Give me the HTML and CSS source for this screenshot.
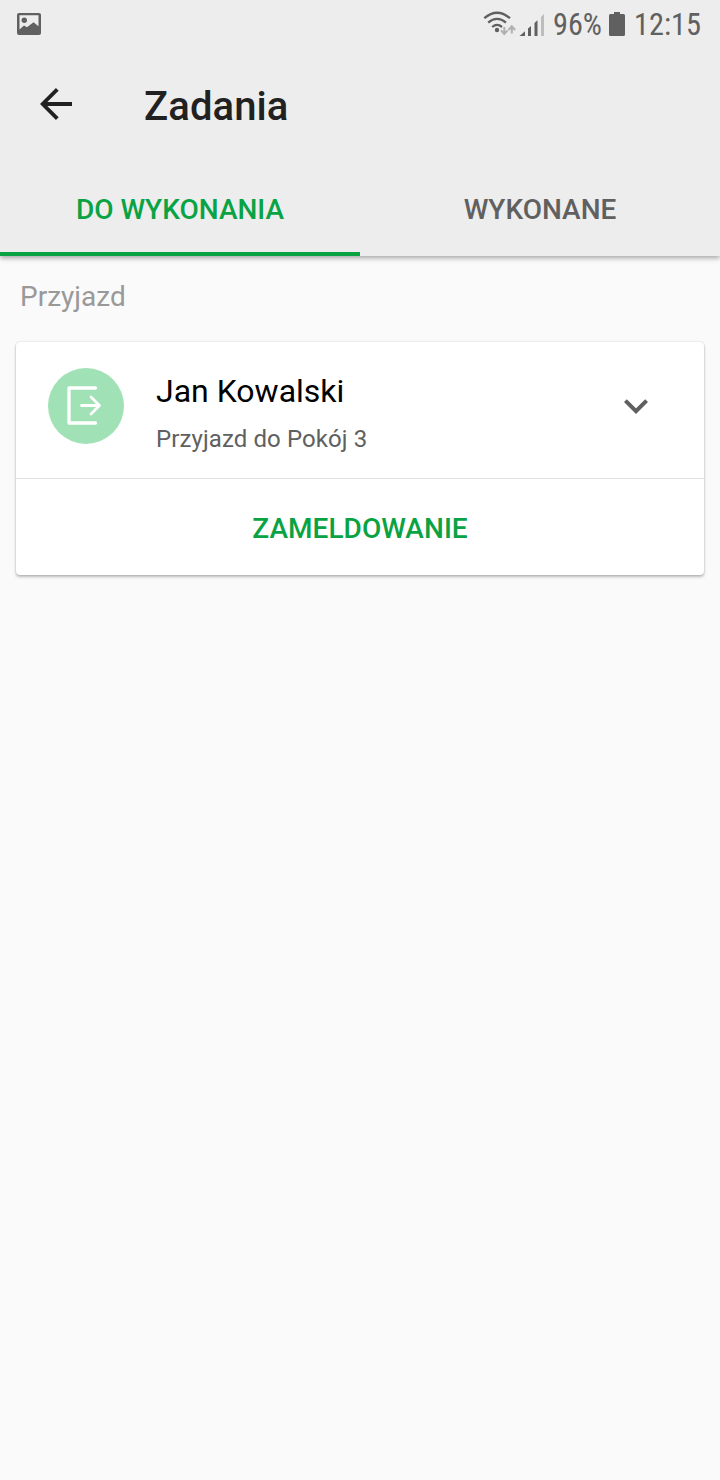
FILE: index.html
```
<!DOCTYPE html>
<html lang="pl">
<head>
    <meta charset="UTF-8">
    <meta name="viewport" content="width=device-width, initial-scale=1.0">
    <title>Zadania</title>
    <link rel="stylesheet" href="styles.css">
</head>
<body>
    <header class="app-header">
        <div class="status-bar">
            <svg class="icon-picture" width="24" height="22" viewBox="0 0 24 22">
                <path fill-rule="evenodd" d="M2 0h20a2 2 0 0 1 2 2v18a2 2 0 0 1-2 2H2a2 2 0 0 1-2-2V2a2 2 0 0 1 2-2zM2.500 2.300V16.500L7 12.500l3 1.800L16.500 9.300l5 4V2.300z"/>
                <circle cx="7.300" cy="7.300" r="2.700"/>
            </svg>
            <svg class="icon-signal" width="64" height="28" viewBox="0 0 64 28">
                <!-- wifi -->
                <g fill="none" stroke="#606060" stroke-width="2.300">
                    <path d="M1.300 8.200Q14 -2.700 27 8.200"/>
                    <path d="M5.200 12.600Q14 5.200 23 12.600"/>
                    <path d="M9.200 17Q14 12.800 19 17"/>
                </g>
                <circle cx="14" cy="20" r="2.200"/>
                <path d="M21.300 17v6M18 20.300l3.300 3.700 3.300-3.700M28.800 23.500v-6M25.500 20l3.300-3.700 3.300 3.700" fill="none" stroke="#b0b0b0" stroke-width="2"/>
                <!-- bars -->
                <path d="M36.500 26l5.500-4.800V26zM45 18.500l3-2.500v10h-3zM51.500 13l3-2.800V26h-3z"/>
                <path d="M58 7l3-3v22h-3z" fill="#bdbdbd"/>
            </svg>
            <svg class="battery-level" width="50" height="48"><text x="0" y="35" textLength="49" lengthAdjust="spacingAndGlyphs">96%</text></svg>
            <svg class="icon-battery" width="16" height="24" viewBox="0 0 16 24">
                <path d="M5 0h6v2h3.500a1.500 1.500 0 0 1 1.500 1.500v19a1.500 1.500 0 0 1-1.500 1.500h-13A1.500 1.500 0 0 1 0 22.500v-19A1.500 1.500 0 0 1 1.500 2H5z"/>
            </svg>
            <svg class="clock" width="68" height="48"><text x="0" y="35" textLength="67" lengthAdjust="spacingAndGlyphs">12:15</text></svg>
        </div>
        <div class="toolbar">
            <svg class="icon-back" width="32" height="32" viewBox="0 0 32 32">
                <path d="M32 16H3M17.300 1.400L2.700 16l14.600 14.600"/>
            </svg>
            <h1>Zadania</h1>
        </div>
        <nav class="tabs">
            <a class="tab active">DO WYKONANIA</a>
            <a class="tab">WYKONANE</a>
        </nav>
    </header>

    <main>
        <h2>Przyjazd</h2>
        <section class="card">
            <div class="card-header">
                <div class="avatar">
                    <svg width="38" height="40" viewBox="0 0 38 40">
                        <path d="M29.500 2H3v35h26.500" stroke-width="3.300"/>
                        <path d="M15.500 19.500h18M25 11l8.500 8.500-8.500 8.500" stroke-width="2.800"/>
                    </svg>
                </div>
                <div class="guest">
                    <div class="guest-name">Jan Kowalski</div>
                    <div class="guest-info">Przyjazd do Pokój 3</div>
                </div>
                <svg class="icon-expand" width="24" height="15" viewBox="0 0 24 15">
                    <path d="M1.400 1.600L12 12.200 22.600 1.600"/>
                </svg>
            </div>
            <button class="card-action">ZAMELDOWANIE</button>
        </section>
    </main>
</body>
</html>
```
FILE: styles.css
```
:root {
    --green: #0aa344;
    --grey: #606060;
}

* {
    box-sizing: border-box;
}

body {
    margin: 0;
    min-height: 100vh;
    background-color: #fafafa;
    font-family: Roboto, sans-serif;
}

h1, h2 {
    margin: 0;
}

.app-header {
    height: 256px;
    background-color: #ededed;
    box-shadow: 0 2px 5px rgba(0, 0, 0, 0.35);
}

/* status bar */
.status-bar {
    display: flex;
    align-items: center;
    height: 48px;
    padding: 0 18px 0 17px;
    fill: var(--grey);
    font-size: 30.5px;
}

.status-bar text {
    font-family: "Roboto Condensed", Roboto, sans-serif;
}

.icon-signal {
    margin-left: auto;
    margin-right: 6px;
}

.battery-level {
    margin-right: 6px;
}

.icon-battery {
    margin-right: 9px;
}

.battery-level, .clock {
    overflow: visible;
}

.toolbar {
    display: flex;
    align-items: center;
    height: 112px;
    padding-left: 40px;
}

.icon-back {
    fill: none;
    stroke: #212121;
    stroke-width: 3.8;
}

.toolbar h1 {
    margin-left: 72px;
    padding-top: 6px;
    font-size: 40px;
    font-weight: 500;
    line-height: 48px;
    letter-spacing: 0.1px;
    color: #212121;
}

/* tabs */
.tabs {
    display: flex;
    height: 96px;
}

.tab {
    flex: 1;
    padding-top: 4px;
    border-bottom: 4px solid transparent;
    font-size: 28px;
    font-weight: 500;
    line-height: 92px;
    height: 96px;
    text-align: center;
    color: var(--grey);
}

.tab.active {
    color: var(--green);
    border-bottom-color: var(--green);
}

main {
    padding: 21px 16px;
}

main h2 {
    padding-left: 4px;
    font-size: 28px;
    font-weight: 400;
    line-height: 40px;
    color: #999;
}

.card {
    margin-top: 25px;
    background-color: #fff;
    border-radius: 4px;
    box-shadow: 0 2px 3px rgba(0, 0, 0, 0.25), 0 0 2px rgba(0, 0, 0, 0.16);
}

.card-header {
    display: flex;
    align-items: flex-start;
    height: 137px;
    padding: 26px 56px 0 32px;
    border-bottom: 1px solid #e0e0e0;
}

.avatar {
    display: flex;
    align-items: center;
    justify-content: center;
    width: 76px;
    height: 76px;
    padding-right: 2px;
    border-radius: 50%;
    background-color: #a0e2b5;
}

.avatar svg {
    fill: none;
    stroke: #fff;
    stroke-linecap: round;
    stroke-linejoin: round;
}

.guest {
    flex: 1;
    margin-left: 32px;
}

.guest-name {
    padding-top: 3px;
    font-size: 32px;
    line-height: 40px;
    color: #000;
}

.guest-info {
    margin-top: 12px;
    font-size: 24px;
    line-height: 32px;
    letter-spacing: 0.1px;
    color: var(--grey);
}

.icon-expand {
    margin-top: 31px;
    fill: none;
    stroke: var(--grey);
    stroke-width: 4;
}

.card-action {
    display: block;
    width: 100%;
    height: 96px;
    padding: 2px 0 0;
    border: 0;
    background: none;
    font: 500 28px Roboto, sans-serif;
    letter-spacing: 0.05px;
    color: var(--green);
}
```
